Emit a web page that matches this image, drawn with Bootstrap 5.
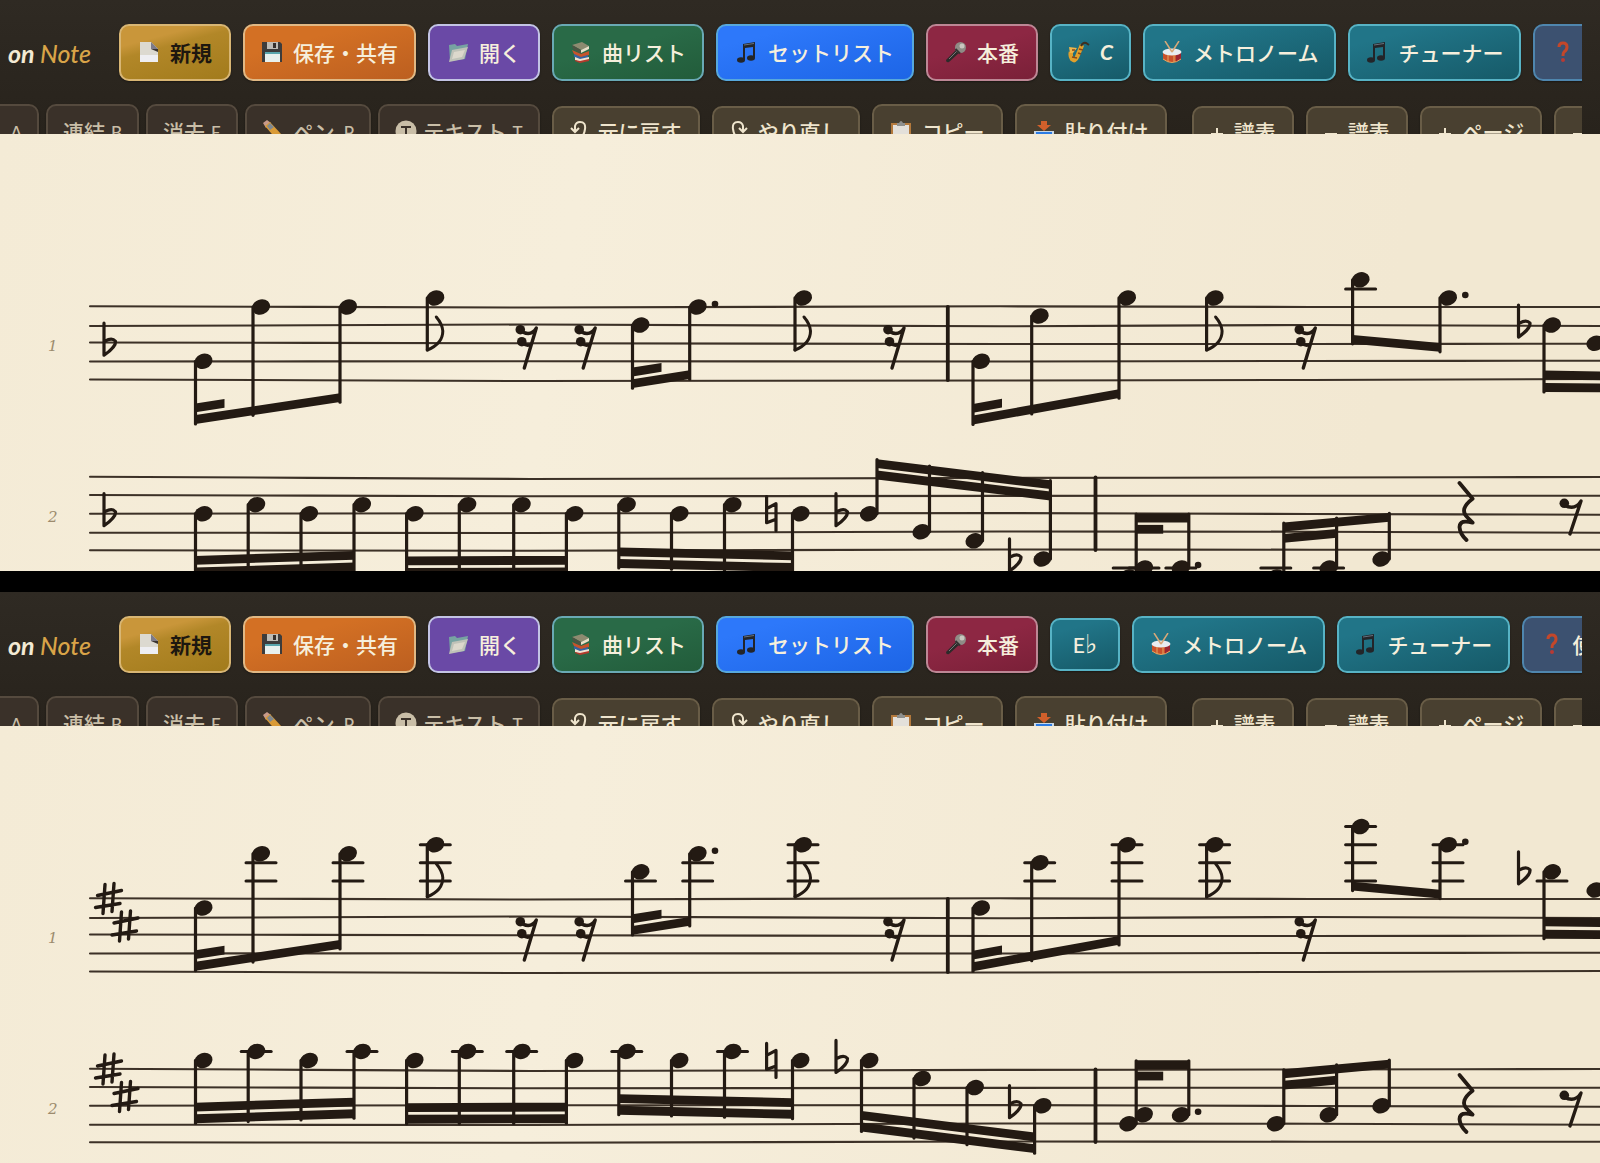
<!DOCTYPE html>
<html lang="ja">
<head>
<meta charset="utf-8">
<meta name="viewport" content="width=device-width, initial-scale=1">
<title>Note</title>
<link rel="stylesheet" href="https://cdn.jsdelivr.net/npm/bootstrap@5.3.0/dist/css/bootstrap.min.css">
<style>
body{background:#000;font-family:"Noto Sans","Noto Sans CJK JP",sans-serif;overflow-x:hidden}
.tools{height:134px;padding-right:18px;background:linear-gradient(#2f2a23,#28231c)}
.clip{height:134px;overflow:hidden;padding-top:24px}
.bar-row{gap:12px}
.bar-row + .bar-row{margin-top:23px}
.brandname{flex:none;width:91px;margin-right:16px;font:italic 700 25px/32px Lato,sans-serif;color:#f3ead4;overflow:hidden}
.brandname b{color:#d9a448;font-weight:500}
.tb{display:inline-flex;align-items:center;justify-content:center;flex:none;height:57px;padding:0 16px 2px;gap:10px;border:2px solid;border-radius:10px;font-size:21px;line-height:30px;font-weight:500;font-family:"Noto Sans CJK JP",sans-serif;color:#f6efdc;white-space:nowrap;box-shadow:0 1px 2px #0006}
.tb svg{width:22px;height:22px;flex:none}
.top{min-width:112px}
.flat-h{height:53px}
.gold{background:linear-gradient(165deg,#c9963a 25%,#b28728 40%,#a27b1c);border-color:#d8b674;color:#1d170f;font-weight:700}
.orange{background:linear-gradient(165deg,#d37024 30%,#bc5f20);border-color:#e0b884}
.violet{background:#6a49a6;border-color:#c3c4e4}
.green{background:linear-gradient(165deg,#296a47 40%,#225c3a);border-color:#69a9b4}
.blue{background:linear-gradient(165deg,#2d78fa 20%,#1d65e6);border-color:#57a8dc;min-width:198px}
.wine{background:linear-gradient(165deg,#8d2743 40%,#7a2038);border-color:#bd8795}
.teal{background:linear-gradient(165deg,#217588 20%,#165a68);border-color:#57b3c5}
.slate{background:#3c5170;border-color:#4f86ae}
.key{min-width:81px;font-family:Lato,"DejaVu Sans",sans-serif;font-style:italic;font-weight:700;gap:10px}
.eflat{min-width:70px;font-weight:500;font-style:normal}
.eflat span{font-size:26px}
.mode-set{gap:7px}
.mode{background:#3a3129;border-color:#554a3e;color:#c9bea7;padding:0 15px 4px;gap:6px}
.mode kbd{background:none;padding:0;color:inherit;font:500 17px/20px Lato,sans-serif;padding-top:4px}
.first-mode{width:95px;margin-left:-56px;justify-content:flex-end}
.pen{gap:9px}
.act{background:#494030;border-color:#695d47;color:#efe5cd;padding-bottom:4px}
.act svg.gl{width:18px}
.act svg.sg{width:14px}
.edit-end{margin-right:13px}
.sheet{background:linear-gradient(100deg,#f4ebd6,#f6eedb 35%,#f2e8d2 85%);overflow:hidden}
.sheet svg{display:block;width:100%;height:437px}
.num{font:italic 15px "DejaVu Serif",serif;fill:#9c8b6d}
.split{height:21px}
</style>
</head>
<body>
<svg class="d-none" aria-hidden="true">
<symbol id="i-new" viewBox="0 0 22 22"><path d="M2 1h11l7 7v13H2z" fill="#dcd9d0"/><path d="M2 14h18v7H2z" fill="#eeeef2"/><path d="M13 1l7 7h-7z" fill="#7c7a88"/><path d="M13 8h7v3z" fill="#3a3430"/></symbol>
<symbol id="i-save" viewBox="0 0 22 22"><path d="M1 1h18l2 2v18H1z" fill="#3d3c3b"/><path d="M6 1h11v7H6z" fill="#bdbcb6"/><path d="M12 2h3v5h-3z" fill="#35302c"/><path d="M4 11h15v10H4z" fill="#e8f1ee"/><path d="M4 11h15v2H4z" fill="#59a6ad"/></symbol>
<symbol id="i-open" viewBox="0 0 22 22"><path d="M2 4l6-1 2 2 11-2-3 15-15 2z" fill="#77a3a2"/><path d="M5 9l16-3-4 12-15 3z" fill="#bfc2b8"/><path d="M7 11l11-2-3 7-10 2z" fill="#dcd8cc"/></symbol>
<symbol id="i-books" viewBox="0 0 22 22"><path d="M2 4l10-3 7 4-8 4z" fill="#8d8b70"/><path d="M2 4l9 5v4L3 8z" fill="#4b5543"/><path d="M11 9l8-4v3l-8 4z" fill="#e9dfc8"/><path d="M2 9l9 4 8-3v4l-9 3-6-4z" fill="#c6532b"/><path d="M4 13l7 3 7-2v3l-8 2-6-3z" fill="#3563a0"/><path d="M5 16l5 2 9-2v3l-9 2-5-2z" fill="#efe3d2"/><path d="M5 19l5 1 9-2v2l-9 2-5-2z" fill="#b33a2c"/></symbol>
<symbol id="i-note" viewBox="0 0 22 22"><g fill="#232529"><ellipse cx="5" cy="19" rx="4" ry="2.700"/><ellipse cx="15" cy="17" rx="4" ry="2.700"/><path d="M7 3l12-2v16h-2V6L9 7v12H7z"/></g><path d="M8 4l10-1.500" stroke="#66717e"/></symbol>
<symbol id="i-mic" viewBox="0 0 22 22"><path d="M1 19L12 8l3 3L4 21q-3 1-3-2z" fill="#2c2b2a"/><path d="M4 18l8-8" stroke="#777"/><circle cx="15.500" cy="6.500" r="5.500" fill="#8f8c86"/><circle cx="17" cy="5" r="2.500" fill="#c9c6bf"/><path d="M10.500 8l4.500 4.500" stroke="#333" stroke-width="2"/></symbol>
<symbol id="i-sax" viewBox="0 0 22 22"><path d="M14 4L9 16q-2 5-5 2-2-3-1-7" fill="none" stroke="#e0a02c" stroke-width="4.500"/><path d="M1 6l8 1-4 5-3 0z" fill="#efb64a"/><path d="M13 5q2-4 5-3l3 2" fill="none" stroke="#3f2f20" stroke-width="2"/><path d="M11 8l4 1M10 12l3 1M4 16l5 1M4 9l3 0" stroke="#8a4a1a" stroke-width="1.500"/></symbol>
<symbol id="i-drum" viewBox="0 0 22 22"><path d="M2 11v7q9 7 18 0v-7z" fill="#c9512a"/><path d="M15 14l5-3v7l-5 3z" fill="#9c2531"/><ellipse cx="11" cy="11" rx="9.500" ry="3.500" fill="#e8edf0"/><path d="M2 18q9 7 18 0M7 14v7M13 14v7" fill="none" stroke="#e4a860"/><path d="M4 0l7 11M18 0l-7 11" stroke="#d8a878" stroke-width="1.500"/></symbol>
<symbol id="i-help" viewBox="0 0 22 22"><path d="M8 6q0-4 4-4t4 4q0 3-3 5-1 1-1 4" fill="none" stroke="#c4472a" stroke-width="3"/><circle cx="12" cy="19" r="2" fill="#b83a34"/></symbol>
<symbol id="i-pencil" viewBox="0 0 22 22"><path d="M1 3l4-3 4 3-5 5z" fill="#c79a8a"/><path d="M3 6l5-4 12 13-5 5z" fill="#d99a36"/><path d="M5 6l3-3 4 4-4 3z" fill="#7d8790"/><path d="M15 20l5-5 1 6z" fill="#e8cfa0"/></symbol>
<symbol id="i-t" viewBox="0 0 22 22"><circle cx="11" cy="11" r="10.500" fill="#c9bea7"/><path d="M6 7h10M11 7v10" stroke="#3a3129" stroke-width="2"/></symbol>
<symbol id="i-undo" viewBox="0 0 18 22"><path d="M5 12V6q1-4 5-4 6 0 5 7-1 8-7 10M1 8l4 4 4-4" fill="none" stroke="#efe5cd" stroke-width="2"/></symbol>
<symbol id="i-redo" viewBox="0 0 18 22"><path d="M13 12V6q-1-4-5-4-6 0-5 7 1 8 7 10M9 8l4 4 4-4" fill="none" stroke="#efe5cd" stroke-width="2"/></symbol>
<symbol id="i-clip" viewBox="0 0 22 22"><path d="M1 3h20v19H1z" fill="#b3793c"/><path d="M3 5h16v17H3z" fill="#e3e0da"/><path d="M7 6V3h2q2-4 4 0h2v3z" fill="#8e908e"/></symbol>
<symbol id="i-paste" viewBox="0 0 22 22"><path d="M8 1h6v4h4l-7 6-7-6h4z" fill="#d2602b"/><path d="M1 11h20v10H1z" fill="#c9d7e4"/><path d="M3 12h16v9H3z" fill="#2b7be4"/></symbol>
<symbol id="i-plus" viewBox="0 0 14 22"><path d="M1 14h12M7 8v12" stroke="#efe5cd" stroke-width="2"/></symbol>
<symbol id="i-minus" viewBox="0 0 14 22"><path d="M1 14h12" stroke="#efe5cd" stroke-width="2"/></symbol>
</svg>

<main>
<section aria-label="C">
  <header class="tools"><div class="clip">
    <div class="bar-row d-flex align-items-center">
      <div class="brandname d-flex justify-content-end text-nowrap"><span>on <b>Note</b></span></div>
      <button class="tb top gold" type="button"><svg><use href="#i-new"/></svg>新規</button>
      <button class="tb top orange" type="button"><svg><use href="#i-save"/></svg>保存・共有</button>
      <button class="tb top violet" type="button"><svg><use href="#i-open"/></svg>開く</button>
      <button class="tb top green" type="button"><svg><use href="#i-books"/></svg>曲リスト</button>
      <button class="tb blue" type="button"><svg><use href="#i-note"/></svg>セットリスト</button>
      <button class="tb top wine" type="button"><svg><use href="#i-mic"/></svg>本番</button>
      <button class="tb teal key" type="button"><svg><use href="#i-sax"/></svg>C</button>
      <button class="tb teal" type="button"><svg><use href="#i-drum"/></svg>メトロノーム</button>
      <button class="tb teal" type="button"><svg><use href="#i-note"/></svg>チューナー</button>
      <button class="tb slate" type="button"><svg><use href="#i-help"/></svg>使い方</button>
    </div>
    <div class="bar-row d-flex align-items-center">
      <div class="d-flex mode-set">
        <button class="tb mode first-mode" type="button"><kbd>A</kbd></button>
        <button class="tb mode" type="button">連結<kbd>B</kbd></button>
        <button class="tb mode" type="button">消去<kbd>E</kbd></button>
        <button class="tb mode pen" type="button"><svg><use href="#i-pencil"/></svg>ペン<kbd>P</kbd></button>
        <button class="tb mode" type="button"><svg><use href="#i-t"/></svg>テキスト<kbd>T</kbd></button>
      </div>
      <button class="tb act flat-h" type="button"><svg class="gl"><use href="#i-undo"/></svg>元に戻す</button>
      <button class="tb act flat-h" type="button"><svg class="gl"><use href="#i-redo"/></svg>やり直し</button>
      <button class="tb act" type="button"><svg><use href="#i-clip"/></svg>コピー</button>
      <button class="tb act edit-end" type="button"><svg><use href="#i-paste"/></svg>貼り付け</button>
      <button class="tb act flat-h" type="button"><svg class="sg"><use href="#i-plus"/></svg>譜表</button>
      <button class="tb act flat-h" type="button"><svg class="sg"><use href="#i-minus"/></svg>譜表</button>
      <button class="tb act flat-h" type="button"><svg class="sg"><use href="#i-plus"/></svg>ページ</button>
      <button class="tb act flat-h" type="button"><svg class="sg"><use href="#i-minus"/></svg>ページ</button>
    </div>
  </div></header>
  <div class="sheet"><svg id="score-c" viewBox="0 0 1600 437" preserveAspectRatio="xMinYMin slice" role="img"></svg></div>
</section>
<div class="split"></div>
<section aria-label="E♭">
  <header class="tools"><div class="clip">
    <div class="bar-row d-flex align-items-center">
      <div class="brandname d-flex justify-content-end text-nowrap"><span>on <b>Note</b></span></div>
      <button class="tb top gold" type="button"><svg><use href="#i-new"/></svg>新規</button>
      <button class="tb top orange" type="button"><svg><use href="#i-save"/></svg>保存・共有</button>
      <button class="tb top violet" type="button"><svg><use href="#i-open"/></svg>開く</button>
      <button class="tb top green" type="button"><svg><use href="#i-books"/></svg>曲リスト</button>
      <button class="tb blue" type="button"><svg><use href="#i-note"/></svg>セットリスト</button>
      <button class="tb top wine" type="button"><svg><use href="#i-mic"/></svg>本番</button>
      <button class="tb teal key eflat flat-h" type="button"><div>E<span>♭</span></div></button>
      <button class="tb teal" type="button"><svg><use href="#i-drum"/></svg>メトロノーム</button>
      <button class="tb teal" type="button"><svg><use href="#i-note"/></svg>チューナー</button>
      <button class="tb slate" type="button"><svg><use href="#i-help"/></svg>使い方</button>
    </div>
    <div class="bar-row d-flex align-items-center">
      <div class="d-flex mode-set">
        <button class="tb mode first-mode" type="button"><kbd>A</kbd></button>
        <button class="tb mode" type="button">連結<kbd>B</kbd></button>
        <button class="tb mode" type="button">消去<kbd>E</kbd></button>
        <button class="tb mode pen" type="button"><svg><use href="#i-pencil"/></svg>ペン<kbd>P</kbd></button>
        <button class="tb mode" type="button"><svg><use href="#i-t"/></svg>テキスト<kbd>T</kbd></button>
      </div>
      <button class="tb act flat-h" type="button"><svg class="gl"><use href="#i-undo"/></svg>元に戻す</button>
      <button class="tb act flat-h" type="button"><svg class="gl"><use href="#i-redo"/></svg>やり直し</button>
      <button class="tb act" type="button"><svg><use href="#i-clip"/></svg>コピー</button>
      <button class="tb act edit-end" type="button"><svg><use href="#i-paste"/></svg>貼り付け</button>
      <button class="tb act flat-h" type="button"><svg class="sg"><use href="#i-plus"/></svg>譜表</button>
      <button class="tb act flat-h" type="button"><svg class="sg"><use href="#i-minus"/></svg>譜表</button>
      <button class="tb act flat-h" type="button"><svg class="sg"><use href="#i-plus"/></svg>ページ</button>
      <button class="tb act flat-h" type="button"><svg class="sg"><use href="#i-minus"/></svg>ページ</button>
    </div>
  </div></header>
  <div class="sheet"><svg id="score-eb" viewBox="0 0 1600 437" preserveAspectRatio="xMinYMin slice" role="img"></svg></div>
</section>
</main>
<script src="https://cdn.jsdelivr.net/npm/bootstrap@5.3.0/dist/js/bootstrap.bundle.min.js"></script>
<script>
const INK = '#231a13', STEP = 9.05, TOPS = [173, 343.5];
// five hand-drawn lines per staff: y at each x of XS
const STAVES = [
  [[172.3,173.5,172.3,173,173],[192,190.5,192.3,191,192],[208.5,209.3,210,210,209.7],[227.5,227.3,227.5,227,226.7],[245.5,247,246.5,246,245]],
  [[342.7,345,343.9,343.5,343],[361,362.3,361.9,361.7,361.7],[379.7,379.3,379.1,380,380.7],[398.7,399,397.5,397.7,398.7],[416.3,416.7,415.5,415.7,415.7]]
];
const XS = [90, 530, 1000, 1310, 1602];
// n: [x, position below the top line, augmentation dot]; a, b: beam height at its ends
const beams = [
  {s:0, n:[[203.5,6],[261,0],[348,0]], a:285.5, b:263.7, sub:[[0,29]]},
  {s:0, n:[[640.5,2],[697.7,0,1]], a:249.7, b:240.7, sub:[[0,29]]},
  {s:0, n:[[981,6],[1039.7,1],[1127,-1]], a:286, b:259.7, sub:[[0,29]]},
  {s:0, n:[[1360.6,-3],[1448,-1,1]], a:205.3, b:213.3, sub:[]},
  {s:1, n:[[203.5,4],[256.2,3],[309,4],[362,3]], a:438, b:433, sub:[[0,999]]},
  {s:1, n:[[414.6,4],[467.3,3],[521.7,3],[574.4,4]], a:438.5, b:438, sub:[[0,999]]},
  {s:1, n:[[626.8,3],[679.5,4],[732.5,3],[800.5,4]], a:429.5, b:433.5, sub:[[0,999]]},
  {s:1, up:1, n:[[1128.2,11],[1180.8,10,1]], a:384, b:384, sub:[[0,27]]},
  {s:1, up:1, n:[[1275.8,11],[1328.6,10],[1381.3,9]], a:393, b:383.3, sub:[[0,53]]}
];
const eighths = [435.3, 803, 1214.6];
function draw(id, shift, flip) {
  const dy = shift * STEP; let o = '';
  const line = (x1,y1,x2,y2,w) => o += `<path d="M${x1} ${y1}L${x2} ${y2}" stroke-width="${w||3.2}"/>`;
  const path = (d,w) => o += `<path d="${d}" stroke-width="${w||3.2}"/>`;
  const dot = (x,y,r) => o += `<circle cx="${x}" cy="${y}" r="${r}" fill="${INK}" stroke="none"/>`;
  const slab = (x1,y1,x2,y2) => o += `<path d="M${x1} ${y1-4.4}L${x2} ${y2-4.4}V${y2+4.4}L${x1} ${y1+4.4}z" fill="${INK}" stroke="none"/>`;
  const yOf = (s,p) => TOPS[s] + (p + shift) * STEP;
  function head(s,x,p,aug) {
    const y = yOf(s,p), q = p + shift;
    for (let k=-2; k>=q; k-=2) line(x-15, TOPS[s]+k*STEP, x+15, TOPS[s]+k*STEP, 3);
    for (let k=10; k<=q; k+=2) line(x-15, TOPS[s]+k*STEP, x+15, TOPS[s]+k*STEP, 3);
    o += `<ellipse cx="${x}" cy="${y}" rx="9.2" ry="7.5" transform="rotate(-20 ${x} ${y})" fill="${INK}" stroke="none"/>`;
    if (aug) dot(x+17.3, y-3, 3.3);
  }
  function group(g, off) {
    const up = g.up, sx = n => n[0] + (up ? 8 : -8);
    const x1 = sx(g.n[0]), x2 = sx(g.n[g.n.length-1]), a = g.a+off, b = g.b+off;
    const at = x => a + (b-a)*(x-x1)/(x2-x1), d = up ? 11.3 : -11.7;
    g.n.forEach(n => { head(g.s, n[0], n[1], n[2]); line(sx(n), yOf(g.s,n[1]), sx(n), at(sx(n)) + (up?-4:4.5)); });
    slab(x1, a, x2, b);
    g.sub.forEach(([f,len]) => { const e = Math.min(x1+len, x2); slab(x1, a+d, e, at(e)+d); });
  }
  const flat = (x,y) => path(`M${x} ${y-20}V${y+12}C${x+6} ${y+8} ${x+12} ${y+2} ${x+11.5} ${y-2}Q${x+8} ${y-6} ${x+1} ${y-2}`);
  const sharp = (x,y) => path(`M${x-3.5} ${y-14}L${x-5.5} ${y+15}M${x+5.5} ${y-15}L${x+3.5} ${y+13}M${x-11} ${y-3}L${x+13} ${y-8}M${x-13} ${y+9}L${x+11.5} ${y+5}`,3.4);
  // staves, bar numbers and key signature
  STAVES.forEach((st,i) => {
    st.forEach(r => { let d = `M${XS[0]} ${r[0]}`;
      for (let k=1;k<5;k++){ const m=(XS[k-1]+XS[k])/2; d += `C${m} ${r[k-1]} ${m} ${r[k]} ${XS[k]} ${r[k]}`; }
      o += `<path d="${d}" stroke="#3c3127" stroke-width="2.1"/>`; });
    o += `<text class="num" x="48" y="${i?388:217}" stroke="none">${i+1}</text>`;
    if (shift) { sharp(108.5, TOPS[i]-.5); sharp(125, TOPS[i]+27); } else flat(104, TOPS[i]+4*STEP);
  });
  line(947.8,173,947.8,246,3.8); line(1095.5,343.5,1095.5,416,3.8);
  beams.forEach(g => group(g, dy));
  eighths.forEach(x => { head(0,x,-1); const sx=x-8, b=216+dy;
    line(sx, yOf(0,-1), sx, b); path(`M${sx} ${b}C${sx+10} ${b-4} ${sx+15.5} ${b-10} ${sx+15.5} ${b-19}Q${sx+15} ${b-26} ${sx+9} ${b-33}`,3); });
  // sixteenth rests
  [520.3,579.2,888,1299.3].forEach(x => { dot(x,195.7,4.8); dot(x+1.5,207.7,4.8);
    path(`M${x} 197Q${x+11} 203 ${x+16} 194L${x+4} 234M${x+2} 209Q${x+7} 213 ${x+11} 210`,3.4); });
  // last visible group runs past the edge
  head(0,1552,2); head(0,1595.5,4); line(1544,yOf(0,2),1544,258+dy); slab(1544,253.5+dy,1610,254+dy); slab(1544,241+dy,1610,242+dy);
  flat(1518.5,yOf(0,2)); flat(836,yOf(1,4)); flat(1009.5,yOf(1,9));
  const ny = yOf(1,4);
  path(`M766.6 ${ny-17}V${ny+9}L776 ${ny+5.5}M776 ${ny+17}V${ny-10}L766.6 ${ny-5}`);
  head(1,1144,10);
  group(flip
    ? {s:1, n:[[869.5,4],[922,6],[975,7],[1042.6,9]], a:401, b:422.7, sub:[[0,999]]}
    : {s:1, up:1, n:[[869,4],[921.5,6],[974.5,7],[1042.4,9]], a:329.7, b:350.7, sub:[[0,999]]}, 0);
  path('M1459.5 349L1472.6 364.7Q1459 375 1467 383L1472.6 388.7Q1460 385 1459.5 393Q1460 400 1466.5 406',3.8);
  dot(1564.3,369.3,4.8); path('M1564 371Q1575 377 1581 367L1570 400',3.4);
  document.getElementById(id).innerHTML = `<g fill="none" stroke="${INK}" stroke-linecap="round" stroke-linejoin="round">${o}</g>`;
}
draw('score-c', 0, false);
draw('score-eb', -5, true);
</script>
</body>
</html>
